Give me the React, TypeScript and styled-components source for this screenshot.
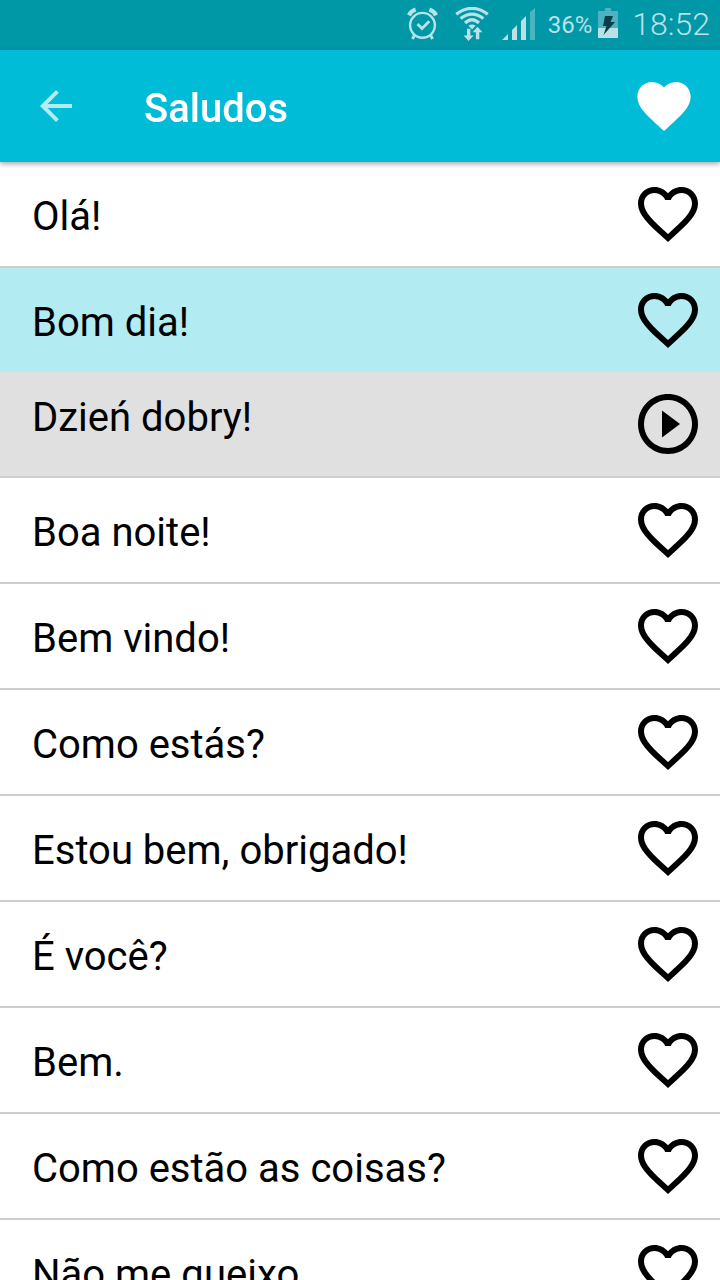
import React, { useState } from "react";
import styled, { createGlobalStyle } from "styled-components";

const GlobalStyle = createGlobalStyle`
  * { box-sizing: border-box; }
  body {
    margin: 0;
    background: #ffffff;
    color: #000000;
    font-family: Roboto, "Liberation Sans", sans-serif;
  }
`;

const Screen = styled.div`
  display: flex;
  flex-direction: column;
  height: 100vh;
  overflow: hidden;
`;

const StatusBar = styled.div`
  display: flex;
  flex: none;
  align-items: center;
  justify-content: flex-end;
  height: 50px;
  padding-right: 10px;
  background: #0097a7;
  color: #b9e1e7;

  svg {
    display: block;
    flex: none;
  }
`;

const StatusIcons = styled.div`
  display: flex;
  gap: 13px;
  margin-right: 12px;
`;

const BatteryLevel = styled.span`
  margin-right: 6px;
  font-size: 24px;
  line-height: 48px;
`;

const Clock = styled.time`
  margin-left: 14px;
  padding-bottom: 2px;
  font-size: 32px;
  font-weight: 300;
  line-height: 48px;
`;

const AppBar = styled.header`
  position: relative;
  z-index: 1;
  display: flex;
  flex: none;
  align-items: center;
  height: 112px;
  padding: 0 24px 0 32px;
  background: #00bcd7;
  color: #ffffff;
  box-shadow: 0 2px 5px rgba(0, 0, 0, 0.35);
`;

const Title = styled.h1`
  flex: 1;
  margin: 6px 0 0 64px;
  font-size: 40px;
  font-weight: 500;
  line-height: 48px;
`;

const IconButton = styled.button<{ $faded?: boolean }>`
  flex: none;
  padding: 0;
  border: 0;
  background: none;
  color: inherit;
  cursor: pointer;
  opacity: ${({ $faded }) => ($faded ? 0.7 : 1)};

  svg {
    display: block;
  }
`;

const PhraseList = styled.ul`
  flex: 1;
  min-height: 0;
  margin: 0;
  padding: 0;
  overflow-y: auto;
  scrollbar-width: none;
  list-style: none;
`;

type Tone = "plain" | "selected" | "translation";

const toneColors: Record<Tone, string> = {
  plain: "#ffffff",
  selected: "#b2ebf2",
  translation: "#e0e0e0",
};

const PhraseRow = styled.li<{ $tone: Tone }>`
  display: flex;
  align-items: center;
  height: ${({ $tone }) => ($tone === "selected" ? 104 : 106)}px;
  padding-right: 16px;
  border-bottom: ${({ $tone }) => ($tone === "selected" ? "0" : "2px solid #cfcfcf")};
  background: ${({ $tone }) => toneColors[$tone]};
`;

const PhraseText = styled.button<{ $raised: boolean }>`
  flex: 1;
  align-self: stretch;
  padding: ${({ $raised }) => ($raised ? "0 16px 12px 32px" : "6px 16px 0 32px")};
  border: 0;
  background: none;
  color: inherit;
  font-family: inherit;
  font-size: 40px;
  line-height: 48px;
  text-align: left;
  cursor: pointer;
`;

const AlarmIcon = () => (
  <svg width="38" height="36" viewBox="-3 0 38 36" fill="none" stroke="currentColor" aria-hidden="true">
    <circle cx="15.5" cy="18.3" r="12.4" strokeWidth="2.4" />
    <path d="M10.5 17l4.5 4.5 7.3-7.3" strokeWidth="2.8" />
    <path d="M2 8.3Q3.8 4.2 8.6 2.6M29 8.3Q27.2 4.2 22.4 2.6" strokeWidth="4.2" />
    <path d="M7.5 28L5.5 32M23.5 28L25.5 32" strokeWidth="2.8" />
  </svg>
);

const WifiIcon = () => (
  <svg width="34" height="36" viewBox="0 0 34 36" fill="none" stroke="currentColor" aria-hidden="true">
    <path d="M1.2 7.2Q17-4.4 32.8 7.2M5.6 11.6Q17 2.8 28.4 11.6M10 16Q17 9.4 24 16" strokeWidth="3.2" />
    <path d="M13.4 18.8Q17 16.4 20.6 18.8L17 22.4z" fill="currentColor" stroke="none" />
    <path
      d="M12 21.7h3.4v6.9h3.2L13.6 34l-5-5.4H12zM20.9 32.3v-7h-3.3L22.5 19.7l5 5.6h-3.2v7z"
      fill="currentColor"
      stroke="#0097a7"
      strokeWidth="1"
      paintOrder="stroke"
    />
  </svg>
);

const SignalIcon = () => (
  <svg width="34" height="36" viewBox="0 0 34 36" fill="currentColor" aria-hidden="true">
    <path d="M0 33l6-6v6zM10 33V23l5-5v15zM19 33V14l5-5v24z" />
    <path d="M28 33V5l5-4v32z" opacity="0.4" />
  </svg>
);

const BatteryIcon = () => (
  <svg width="20" height="34" viewBox="0 0 20 34" aria-hidden="true">
    <path d="M7 0h6v3h7v17H0V3h7z" fill="#4cb3bf" />
    <path d="M0 20h20v10H0z" fill="currentColor" />
    <path d="M7 8h8l-2.5 6H17L5.5 27 8.5 18H5z" fill="#073e47" />
  </svg>
);

const ArrowBackIcon = () => (
  <svg width="48" height="48" viewBox="0 0 24 24" fill="currentColor" aria-hidden="true">
    <path d="M20 11H7.83l5.59-5.59L12 4l-8 8 8 8 1.41-1.41L7.83 13H20v-2z" />
  </svg>
);

const HeartIcon = () => (
  <svg width="64" height="64" viewBox="0 0 24 24" fill="currentColor" aria-hidden="true">
    <path d="M12 21.35l-1.45-1.32C5.4 15.36 2 12.28 2 8.5 2 5.42 4.42 3 7.5 3c1.74 0 3.41.81 4.5 2.09C13.09 3.81 14.76 3 16.5 3 19.58 3 22 5.42 22 8.5c0 3.78-3.4 6.86-8.55 11.54L12 21.35z" />
  </svg>
);

const HeartOutlineIcon = () => (
  <svg width="72" height="72" viewBox="0 0 24 24" fill="currentColor" aria-hidden="true">
    <path d="M16.5 3c-1.74 0-3.41.81-4.5 2.09C10.91 3.81 9.24 3 7.5 3 4.42 3 2 5.42 2 8.5c0 3.78 3.4 6.86 8.55 11.54L12 21.35l1.45-1.32C18.6 15.36 22 12.28 22 8.5 22 5.42 19.58 3 16.5 3zm-4.4 15.55l-.1.1-.1-.1C7.14 14.24 4 11.39 4 8.5 4 6.5 5.5 5 7.5 5c1.54 0 3.04.99 3.57 2.36h1.87C13.46 5.99 14.96 5 16.5 5c2 0 3.5 1.5 3.5 3.5 0 2.89-3.14 5.74-7.9 10.05z" />
  </svg>
);

const PlayIcon = () => (
  <svg width="72" height="72" viewBox="0 0 24 24" fill="currentColor" aria-hidden="true">
    <path d="M10 16.5l6-4.5-6-4.5v9zM12 2C6.48 2 2 6.48 2 12s4.48 10 10 10 10-4.48 10-10S17.52 2 12 2zm0 18c-4.41 0-8-3.59-8-8s3.59-8 8-8 8 3.59 8 8-3.59 8-8 8z" />
  </svg>
);

const phrases = [
  "Olá!",
  "Bom dia!",
  "Boa noite!",
  "Bem vindo!",
  "Como estás?",
  "Estou bem, obrigado!",
  "É você?",
  "Bem.",
  "Como estão as coisas?",
  "Não me queixo.",
];

const translations: Record<string, string> = { "Bom dia!": "Dzień dobry!" };

export default function App() {
  const [selected, setSelected] = useState("Bom dia!");

  return (
    <>
      <GlobalStyle />
      <Screen>
        <StatusBar>
          <StatusIcons>
            <AlarmIcon />
            <WifiIcon />
            <SignalIcon />
          </StatusIcons>
          <BatteryLevel>36%</BatteryLevel>
          <BatteryIcon />
          <Clock>18:52</Clock>
        </StatusBar>
        <AppBar>
          <IconButton type="button" aria-label="Voltar" $faded>
            <ArrowBackIcon />
          </IconButton>
          <Title>Saludos</Title>
          <IconButton type="button" aria-label="Favoritos">
            <HeartIcon />
          </IconButton>
        </AppBar>
        <PhraseList>
          {phrases.map((phrase) => {
            const open = phrase === selected && phrase in translations;
            return (
              <React.Fragment key={phrase}>
                <PhraseRow $tone={open ? "selected" : "plain"}>
                  <PhraseText type="button" $raised={false} onClick={() => setSelected(phrase)}>
                    {phrase}
                  </PhraseText>
                  <IconButton type="button" aria-label="Favorito">
                    <HeartOutlineIcon />
                  </IconButton>
                </PhraseRow>
                {open && (
                  <PhraseRow $tone="translation">
                    <PhraseText type="button" $raised>
                      {translations[phrase]}
                    </PhraseText>
                    <IconButton type="button" aria-label="Ouvir">
                      <PlayIcon />
                    </IconButton>
                  </PhraseRow>
                )}
              </React.Fragment>
            );
          })}
        </PhraseList>
      </Screen>
    </>
  );
}
